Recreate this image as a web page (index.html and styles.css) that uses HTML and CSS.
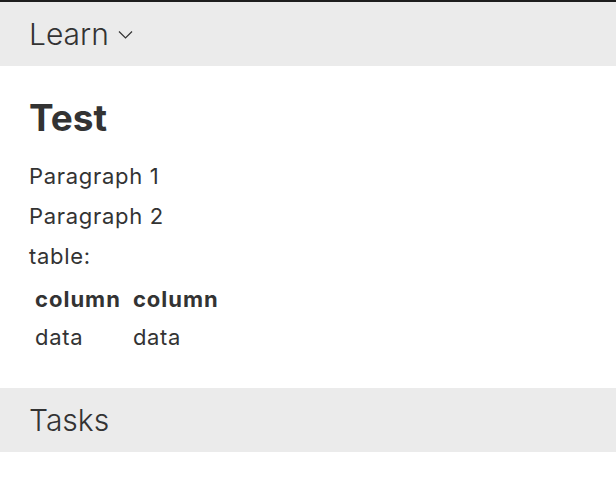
FILE: index.html
```html
<!DOCTYPE html>
<html lang="en">
<head>
    <meta charset="UTF-8">
    <title>Learn</title>
    <link rel="stylesheet" href="styles.css">
</head>
<body>
    <div class="pane">
        <div class="sectionHeader">
            <span>Learn</span>
            <svg class="chevron" width="15" height="10" viewBox="0 0 15 10">
                <path d="M1 1.5 L7.5 8 L14 1.5" fill="none" stroke="#333" stroke-width="1.2"/>
            </svg>
        </div>
        <div class="content">
            <h1>Test</h1>
            <p>Paragraph 1</p>
            <p>Paragraph 2</p>
            <p>table:</p>
            <table>
                <tr><th>column</th><th>column</th></tr>
                <tr><td>data</td><td>data</td></tr>
            </table>
        </div>
        <div class="sectionHeader">
            <span>Tasks</span>
        </div>
    </div>
</body>
</html>
```

FILE: styles.css
```css
body {
    margin: 0;
    background: #fff;
    font-family: Inter, "Liberation Sans", sans-serif;
    color: #333;
}
.pane {
    border-top: 2px solid #1e1e1e;
}
.sectionHeader {
    height: 64px;
    background: #ebebeb;
    display: flex;
    align-items: center;
    gap: 9px;
    padding: 0 29px;
    font-size: 30px;
    font-weight: 300;
}
.chevron {
    margin-top: 1px;
}
.content {
    padding: 30px 29px 32px;
}
h1 {
    margin: 0 0 23px;
    font-size: 37px;
    font-weight: bold;
    line-height: 44px;
}
p {
    margin: 0 0 14px;
    font-size: 22px;
    line-height: 26px;
    letter-spacing: 0.7px;
}
table {
    border-collapse: collapse;
    font-size: 22px;
    letter-spacing: 0.7px;
}
th, td {
    text-align: left;
    padding: 6px 6px;
    line-height: 26px;
}
th {
    padding-top: 3px;
    letter-spacing: 1px;
}
```
